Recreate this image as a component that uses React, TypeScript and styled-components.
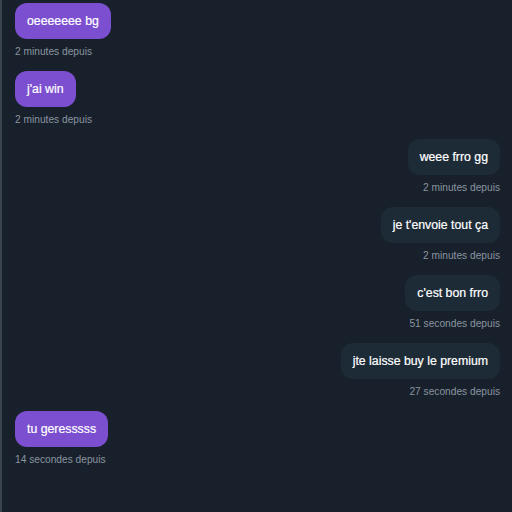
import React from "react";
import styled, { createGlobalStyle } from "styled-components";

const Global = createGlobalStyle`
  html, body { margin: 0; padding: 0; background: #18202b; }
  body { font-family: "Liberation Sans", Arial, sans-serif; }
`;

const Page = styled.div`
  width: 512px;
  height: 512px;
  box-sizing: border-box;
  background: #18202b;
  border-left: 2px solid #3a4550;
  padding: 3px 12px 0 13px;
  display: flex;
  flex-direction: column;
  gap: 13px;
  overflow: hidden;
`;

const Message = styled.div<{ $mine: boolean }>`
  display: flex;
  flex-direction: column;
  align-items: ${(p) => (p.$mine ? "flex-end" : "flex-start")};
  gap: 6px;
`;

const Bubble = styled.div<{ $mine: boolean }>`
  background: ${(p) => (p.$mine ? "#1d2b37" : "#7b4fcf")};
  color: #ffffff;
  font-size: 12.3px;
  line-height: 18px;
  -webkit-text-stroke: 0.2px #ffffff;
  padding: 9px 12px;
  border-radius: 12px;
`;

const Time = styled.div`
  font-size: 10.2px;
  line-height: 13px;
  color: #8a95a0;
`;

const messages = [
  { text: "oeeeeeee bg", time: "2 minutes depuis", mine: false },
  { text: "j'ai win", time: "2 minutes depuis", mine: false },
  { text: "weee frro gg", time: "2 minutes depuis", mine: true },
  { text: "je t'envoie tout ça", time: "2 minutes depuis", mine: true },
  { text: "c'est bon frro", time: "51 secondes depuis", mine: true },
  { text: "jte laisse buy le premium", time: "27 secondes depuis", mine: true },
  { text: "tu geresssss", time: "14 secondes depuis", mine: false },
];

export default function App() {
  return (
    <>
      <Global />
      <Page>
        {messages.map((m, i) => (
          <Message key={i} $mine={m.mine}>
            <Bubble $mine={m.mine}>{m.text}</Bubble>
            <Time>{m.time}</Time>
          </Message>
        ))}
      </Page>
    </>
  );
}
